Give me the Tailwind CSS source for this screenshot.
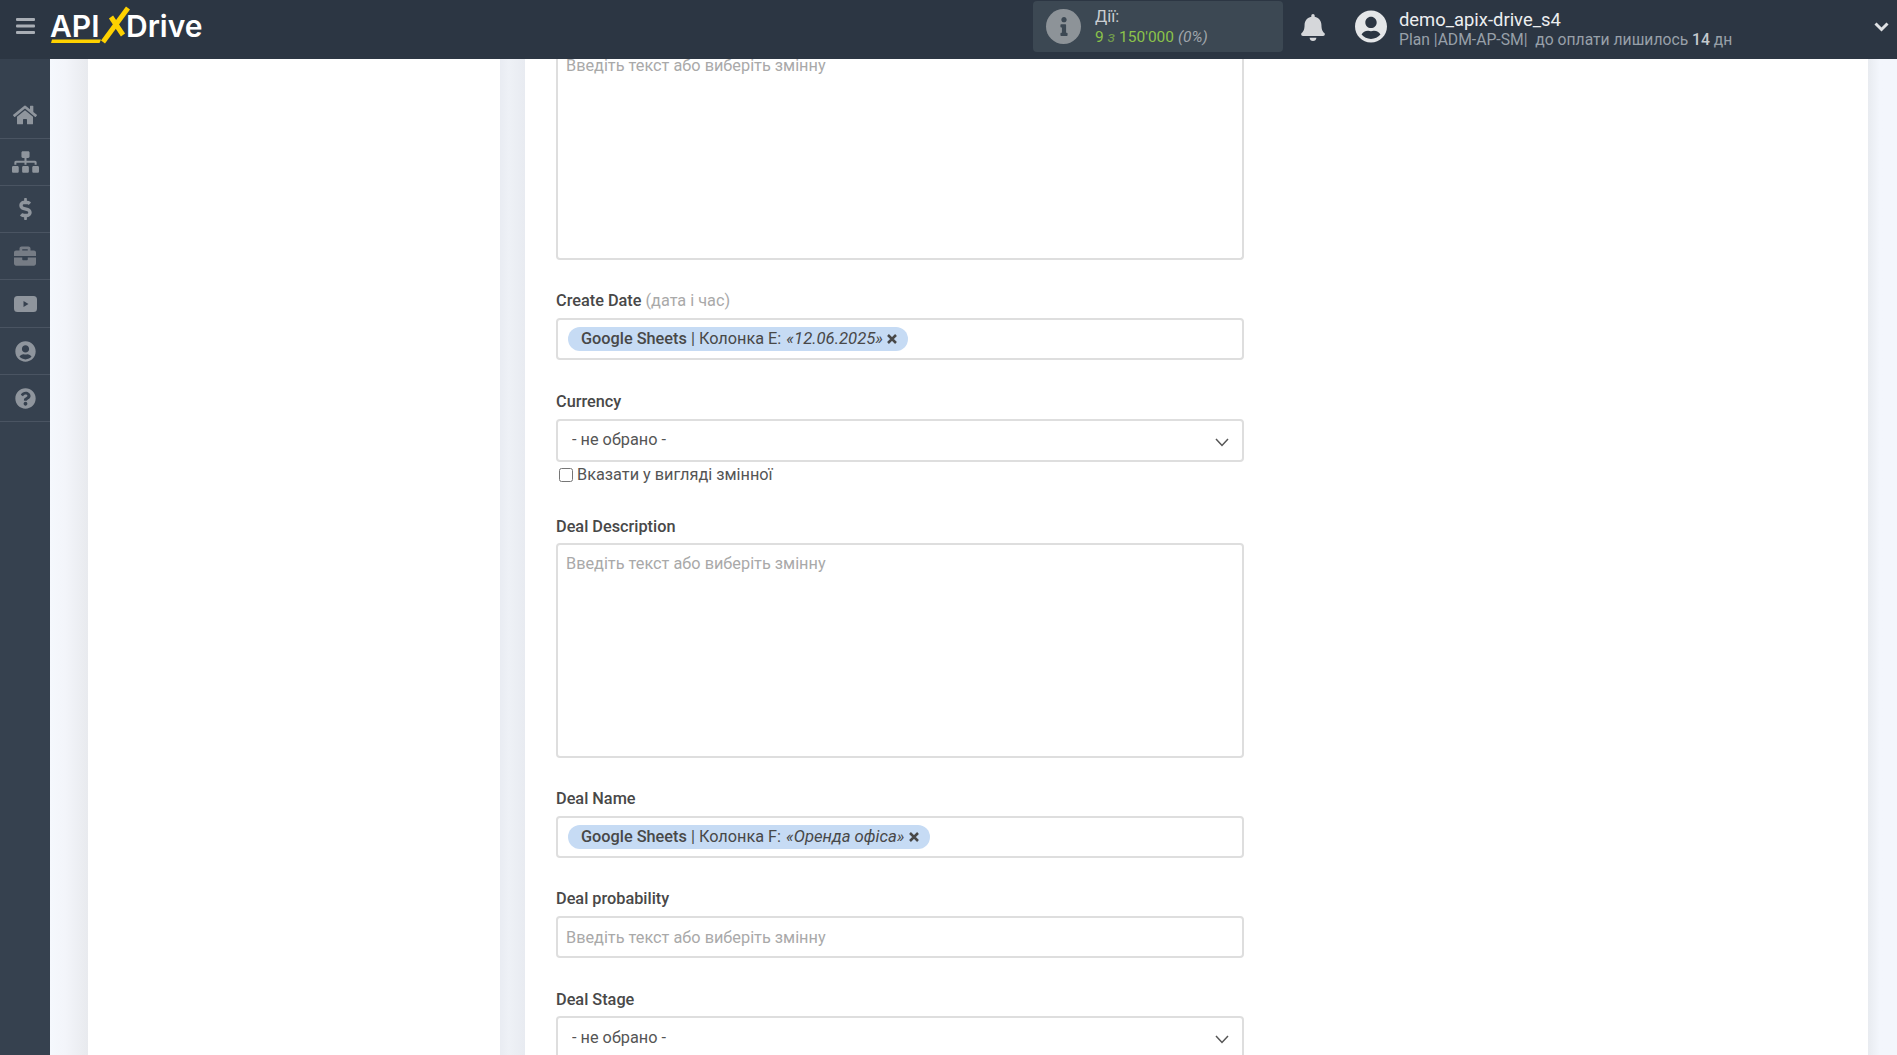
<!DOCTYPE html>
<html lang="uk">

<head>
    <meta charset="UTF-8">
    <meta name="viewport" content="width=device-width, initial-scale=1.0">
    <title>ApiX-Drive</title>
    <script src="https://cdn.jsdelivr.net/npm/@tailwindcss/browser@4"></script>
</head>

<body class="h-[1055px] overflow-hidden bg-white font-['Roboto',sans-serif] text-[16.3px] text-[#484848]">
    <!-- top bar -->
    <header class="flex h-[59px] items-center bg-[#2c3643] pb-[7px]">
        <div class="flex w-[50px] justify-center">
            <svg class="h-[16px] w-[19px] text-[#a9aeb5]" viewBox="0 0 19 16" fill="currentColor">
                <rect y="0" width="19" height="3" rx="1" />
                <rect y="6.5" width="19" height="3" rx="1" />
                <rect y="13" width="19" height="3" rx="1" />
            </svg>
        </div>
        <div class="relative h-[59px] w-[160px] self-start">
            <span class="absolute left-0 top-[9px] font-['Inter',sans-serif] text-[30px] leading-[34px] font-semibold text-white">API</span>
            <svg class="absolute left-0 top-0 h-[59px] w-[160px]" viewBox="0 0 160 59" fill="none">
                <path d="M2 39.5H51L49.5 43H1z" fill="#ffd200" />
                <path d="M53 42L78 8" stroke="#ffd200" stroke-width="5" />
                <path d="M61 17L73 35" stroke="#ffd200" stroke-width="5" />
            </svg>
            <span class="absolute left-[76px] top-[9px] font-['Inter',sans-serif] text-[30px] leading-[34px] font-semibold text-white">Drive</span>
        </div>

        <div class="ml-[823px] flex h-[51px] w-[250px] items-center rounded-[4px] bg-[#3c4853]">
            <div class="ml-[13px] flex h-[35px] w-[35px] items-center justify-center rounded-full bg-[#8d9398]">
                <svg class="h-[19px] w-[8px] text-[#3c4853]" viewBox="0 0 192 512" fill="currentColor">
                    <path d="M20 424.229h20V279.771H20c-11.046 0-20-8.954-20-20V212c0-11.046 8.954-20 20-20h112c11.046 0 20 8.954 20 20v212.229h20c11.046 0 20 8.954 20 20V492c0 11.046-8.954 20-20 20H20c-11.046 0-20-8.954-20-20v-47.771c0-11.046 8.954-20 20-20zM96 0C56.235 0 24 32.235 24 72s32.235 72 72 72 72-32.235 72-72S135.764 0 96 0z" />
                </svg>
            </div>
            <div class="ml-[14px] flex flex-col pt-[1px]">
                <span class="text-[16.3px] leading-[20px] text-[#c9cdd1]">Дії:</span>
                <span class="text-[15.5px] leading-[20px] text-[#8bc34a]">9 <i class="text-[#8bc34a]/70">з</i> 150'000 <i class="text-[#a0a6ac]">(0%)</i></span>
            </div>
        </div>

        <svg class="mt-[2px] ml-[18px] h-[27px] w-[24px] text-[#d5d7da]" viewBox="0 0 448 512" fill="currentColor">
            <path d="M224 512c35.32 0 63.97-28.65 63.97-64H160.03c0 35.35 28.65 64 63.97 64zm215.39-149.71c-19.32-20.76-55.47-51.99-55.47-154.29 0-77.7-54.48-139.9-127.94-155.16V32c0-17.67-14.32-32-31.98-32s-31.98 14.33-31.98 32v20.84C118.56 68.1 64.08 130.3 64.08 208c0 102.3-36.15 133.53-55.47 154.29-6 6.45-8.66 14.16-8.61 21.71.11 16.4 12.98 32 32.1 32h383.8c19.12 0 32-15.6 32.1-32 .05-7.55-2.61-15.27-8.61-21.71z" />
        </svg>

        <svg class="mt-[1px] ml-[30px] h-[33px] w-[32px] text-[#e4e6e8]" viewBox="0 0 496 512" fill="currentColor">
            <path d="M248 8C111 8 0 119 0 256s111 248 248 248 248-111 248-248S385 8 248 8zm0 96c48.6 0 88 39.4 88 88s-39.4 88-88 88-88-39.4-88-88 39.4-88 88-88zm0 344c-58.7 0-111.3-26.6-146.5-68.2 18.8-35.4 55.6-59.8 98.5-59.8 2.4 0 4.8.4 7.1 1.1 13 4.2 26.6 6.9 40.9 6.9 14.3 0 28-2.7 40.9-6.9 2.3-.7 4.7-1.1 7.1-1.1 42.9 0 79.7 24.4 98.5 59.8C359.3 421.4 306.7 448 248 448z" />
        </svg>

        <div class="ml-[12px] flex flex-col self-start pt-[9px]">
            <span class="text-[18.4px] leading-[21px] text-[#eceef0]">demo_apix-drive_s4</span>
            <span class="mt-[1px] text-[15.7px] leading-[18px] text-[#98a0a9]">Plan |ADM-AP-SM|&nbsp; до оплати лишилось <b class="font-medium text-[#c5c9ce]">14</b> дн</span>
        </div>

        <svg class="mt-[2px] mr-[8px] ml-auto h-[10px] w-[15px] text-[#dfe1e4]" viewBox="0 0 15 10" fill="none" stroke="currentColor" stroke-width="3">
            <path d="M1.5 1.5L7.5 7.5L13.5 1.5" />
        </svg>
    </header>

    <div class="flex h-[996px]">
        <!-- side menu -->
        <nav class="flex w-[50px] shrink-0 flex-col bg-[#36414f] pt-[33px]">
            <a class="flex h-[47px] items-center justify-center border-b border-[#4a5462]">
                <svg class="h-[22px] w-[24px] text-[#8f959d]" viewBox="0 0 576 512" fill="currentColor"><path d="M280.37 148.26L96 300.11V464a16 16 0 0 0 16 16l112.06-.29a16 16 0 0 0 15.92-16V368a16 16 0 0 1 16-16h64a16 16 0 0 1 16 16v95.64a16 16 0 0 0 16 16.05L464 480a16 16 0 0 0 16-16V300L295.67 148.26a12.19 12.19 0 0 0-15.3 0zM571.6 251.47L488 182.56V44.05a12 12 0 0 0-12-12h-56a12 12 0 0 0-12 12v72.61L318.47 43a48 48 0 0 0-61 0L4.34 251.47a12 12 0 0 0-1.6 16.9l25.5 31A12 12 0 0 0 45.15 301l235.22-193.74a12.19 12.19 0 0 1 15.3 0L530.9 301a12 12 0 0 0 16.9-1.6l25.5-31a12 12 0 0 0-1.7-16.93z" /></svg>
            </a>
            <a class="flex h-[47px] items-center justify-center border-b border-[#4a5462]">
                <svg class="h-[22px] w-[27px] text-[#8f959d]" viewBox="0 0 640 512" fill="currentColor"><path d="M128 352H32c-17.67 0-32 14.33-32 32v96c0 17.67 14.33 32 32 32h96c17.67 0 32-14.33 32-32v-96c0-17.67-14.33-32-32-32zm-24-80h192v48h48v-48h192v48h48v-57.59c0-21.17-17.23-38.41-38.41-38.41H344v-64h40c17.67 0 32-14.33 32-32V32c0-17.67-14.33-32-32-32H256c-17.67 0-32 14.33-32 32v96c0 17.67 14.33 32 32 32h40v64H94.41C73.23 224 56 241.23 56 262.41V320h48v-48zm264 80h-96c-17.67 0-32 14.33-32 32v96c0 17.67 14.33 32 32 32h96c17.67 0 32-14.33 32-32v-96c0-17.67-14.33-32-32-32zm240 0h-96c-17.67 0-32 14.33-32 32v96c0 17.67 14.33 32 32 32h96c17.67 0 32-14.33 32-32v-96c0-17.67-14.33-32-32-32z" /></svg>
            </a>
            <a class="flex h-[47px] items-center justify-center border-b border-[#4a5462]">
                <svg class="h-[22px] w-[13px] text-[#8f959d]" viewBox="0 0 288 512" fill="currentColor"><path d="M209.2 233.4l-108-31.6C88.7 198.2 80 186.5 80 173.5c0-16.3 13.2-29.5 29.5-29.5h66.3c12.2 0 24.2 3.7 34.2 10.5 6.1 4.1 14.3 3.1 19.5-2l34.8-34c7.1-6.9 6.1-18.4-1.8-24.5C238 74.8 207.4 64.1 176 64V16c0-8.8-7.2-16-16-16h-32c-8.8 0-16 7.2-16 16v48h-2.5C45.8 64-5.4 118.7.5 183.6c4.2 46.1 39.4 83.6 83.8 96.6l102.5 30c12.5 3.7 21.2 15.3 21.2 28.3 0 16.3-13.2 29.5-29.5 29.5h-66.3C100 368 88 364.3 78 357.5c-6.1-4.1-14.3-3.1-19.5 2l-34.8 34c-7.1 6.9-6.1 18.4 1.8 24.5 24.5 19.2 55.1 29.9 86.5 30v48c0 8.8 7.2 16 16 16h32c8.8 0 16-7.2 16-16v-48.2c46.6-.9 90.3-28.6 105.7-72.7 21.5-61.6-14.6-124.8-72.5-141.7z" /></svg>
            </a>
            <a class="flex h-[47px] items-center justify-center border-b border-[#4a5462]">
                <svg class="h-[22px] w-[22px] text-[#767c85]" viewBox="0 0 512 512" fill="currentColor"><path d="M320 336c0 8.84-7.16 16-16 16h-96c-8.84 0-16-7.16-16-16v-48H0v144c0 25.6 22.4 48 48 48h416c25.6 0 48-22.4 48-48V288H320v48zm144-208h-80V80c0-25.6-22.4-48-48-48H176c-25.6 0-48 22.4-48 48v48H48c-25.6 0-48 22.4-48 48v80h512v-80c0-25.6-22.4-48-48-48zm-144 0H192V96h128v32z" /></svg>
            </a>
            <a class="flex h-[48px] items-center justify-center border-b border-[#4a5462]">
                <svg class="h-[16px] w-[23px] text-[#8f959d]" viewBox="0 0 23 16" fill="currentColor"><path fill-rule="evenodd" d="M3.5 0h16A3.5 3.5 0 0 1 23 3.5v9a3.5 3.5 0 0 1-3.5 3.5h-16A3.5 3.5 0 0 1 0 12.5v-9A3.5 3.5 0 0 1 3.5 0zM9.5 5v6l5-3z" /></svg>
            </a>
            <a class="flex h-[47px] items-center justify-center border-b border-[#4a5462]">
                <svg class="h-[21px] w-[21px] text-[#8f959d]" viewBox="0 0 496 512" fill="currentColor"><path d="M248 8C111 8 0 119 0 256s111 248 248 248 248-111 248-248S385 8 248 8zm0 96c48.6 0 88 39.4 88 88s-39.4 88-88 88-88-39.4-88-88 39.4-88 88-88zm0 344c-58.7 0-111.3-26.6-146.5-68.2 18.8-35.4 55.6-59.8 98.5-59.8 2.4 0 4.8.4 7.1 1.1 13 4.2 26.6 6.9 40.9 6.9 14.3 0 28-2.7 40.9-6.9 2.3-.7 4.7-1.1 7.1-1.1 42.9 0 79.7 24.4 98.5 59.8C359.3 421.4 306.7 448 248 448z" /></svg>
            </a>
            <a class="flex h-[47px] items-center justify-center border-b border-[#4a5462]">
                <svg class="h-[21px] w-[21px] text-[#8f959d]" viewBox="0 0 512 512" fill="currentColor"><path d="M504 256c0 136.997-111.043 248-248 248S8 392.997 8 256C8 119.083 119.043 8 256 8s248 111.083 248 248zM262.655 90c-54.497 0-89.255 22.957-116.549 63.758-3.536 5.286-2.353 12.415 2.715 16.258l34.699 26.31c5.205 3.947 12.621 3.008 16.665-2.122 17.864-22.658 30.113-35.797 57.303-35.797 20.429 0 45.698 13.148 45.698 32.958 0 14.976-12.363 22.667-32.534 33.976C247.128 238.528 216 254.941 216 296v4c0 6.627 5.373 12 12 12h56c6.627 0 12-5.373 12-12v-1.333c0-28.462 83.186-29.647 83.186-106.667 0-58.002-60.165-102-116.531-102zM256 338c-25.365 0-46 20.635-46 46 0 25.364 20.635 46 46 46s46-20.636 46-46c0-25.365-20.635-46-46-46z" /></svg>
            </a>
        </nav>

        <main class="flex flex-1">
            <div class="w-[38px] bg-linear-to-r from-[#f5f8fd] via-[#f3f5fa] via-40% to-[#e8eaee]"></div>
            <div class="w-[412px] bg-white"></div>
            <div class="w-[25px] bg-linear-to-r from-[#e9ecf2] via-[#eef1f6] via-35% to-[#e8ebf1]"></div>
            <section class="flex w-[1343px] flex-col bg-white pl-[31px] [&>*]:shrink-0">
                <textarea placeholder="Введіть текст або виберіть змінну" class="h-[201px] w-[688px] resize-none rounded-b-[4px] border-2 border-t-0 border-[#dedede] px-[8px] text-[16.3px] leading-[14px] outline-none placeholder:text-[#a9a9a9]"></textarea>

                <label class="mt-[31px] mb-[7px] h-[20px] leading-[20px] font-medium">Create Date <span class="font-normal text-[#a9a9a9]">(дата і час)</span></label>
                <div class="flex h-[42px] w-[688px] items-center rounded-[4px] border-2 border-[#dedede] px-[10px]">
                    <span class="flex h-[24px] items-center gap-[4px] rounded-[12px] bg-[#c6dbf4] pr-[11px] pl-[13px]">
                        <span class="whitespace-pre"><b class="font-medium">Google Sheets</b> | Колонка E: <i class="ml-[1px] text-[16.7px]">«12.06.2025»</i></span>
                        <svg class="h-[10px] w-[10px] text-[#484848]" viewBox="0 0 10 10" fill="none" stroke="currentColor" stroke-width="2.5"><path d="M1 1l8 8M9 1l-8 8" /></svg>
                    </span>
                </div>

                <label class="mt-[32px] mb-[7px] h-[20px] leading-[20px] font-medium">Currency</label>
                <div class="relative w-[688px]">
                    <select class="h-[43px] w-full appearance-none rounded-[4px] border-2 border-[#dedede] bg-white px-[14px] text-[16.3px] text-[#555] outline-none">
                        <option>- не обрано -</option>
                    </select>
                    <svg class="absolute top-[19px] right-[15px] h-[9px] w-[14px] text-[#555]" viewBox="0 0 14 9" fill="none" stroke="currentColor" stroke-width="1.5"><path d="M1 1l6 6.5L13 1" /></svg>
                </div>
                <label class="mt-[4px] flex h-[18px] items-center gap-[4px] pl-[3px] leading-[18px] text-[#555]">
                    <input type="checkbox" class="h-[14px] w-[14px]">
                    Вказати у вигляді змінної
                </label>

                <label class="mt-[33px] mb-[6px] h-[20px] leading-[20px] font-medium">Deal Description</label>
                <textarea placeholder="Введіть текст або виберіть змінну" class="h-[215px] w-[688px] resize-none rounded-[4px] border-2 border-[#dedede] px-[8px] py-[7px] text-[16.3px] outline-none placeholder:text-[#a9a9a9]"></textarea>

                <label class="mt-[31px] mb-[7px] h-[20px] leading-[20px] font-medium">Deal Name</label>
                <div class="flex h-[42px] w-[688px] items-center rounded-[4px] border-2 border-[#dedede] px-[10px]">
                    <span class="flex h-[24px] items-center gap-[5px] rounded-[12px] bg-[#c6dbf4] pr-[11px] pl-[13px]">
                        <span class="whitespace-pre"><b class="font-medium">Google Sheets</b> | Колонка F: <i class="ml-[1px] text-[16.7px]">«Оренда офіса»</i></span>
                        <svg class="h-[10px] w-[10px] text-[#484848]" viewBox="0 0 10 10" fill="none" stroke="currentColor" stroke-width="2.5"><path d="M1 1l8 8M9 1l-8 8" /></svg>
                    </span>
                </div>

                <label class="mt-[31px] mb-[7px] h-[20px] leading-[20px] font-medium">Deal probability</label>
                <input type="text" placeholder="Введіть текст або виберіть змінну" class="h-[42px] w-[688px] rounded-[4px] border-2 border-[#dedede] px-[8px] text-[16.3px] outline-none placeholder:text-[#a9a9a9]">

                <label class="mt-[32px] mb-[6px] h-[20px] leading-[20px] font-medium">Deal Stage</label>
                <div class="relative w-[688px]">
                    <select class="h-[44px] w-full appearance-none rounded-[4px] border-2 border-[#dedede] bg-white px-[14px] text-[16.3px] text-[#555] outline-none">
                        <option>- не обрано -</option>
                    </select>
                    <svg class="absolute top-[19px] right-[15px] h-[9px] w-[14px] text-[#555]" viewBox="0 0 14 9" fill="none" stroke="currentColor" stroke-width="1.5"><path d="M1 1l6 6.5L13 1" /></svg>
                </div>
            </section>
            <div class="flex-1 bg-linear-to-r from-[#e8ebf0] to-[#f3f6fc] to-40%"></div>
        </main>
    </div>
</body>

</html>
